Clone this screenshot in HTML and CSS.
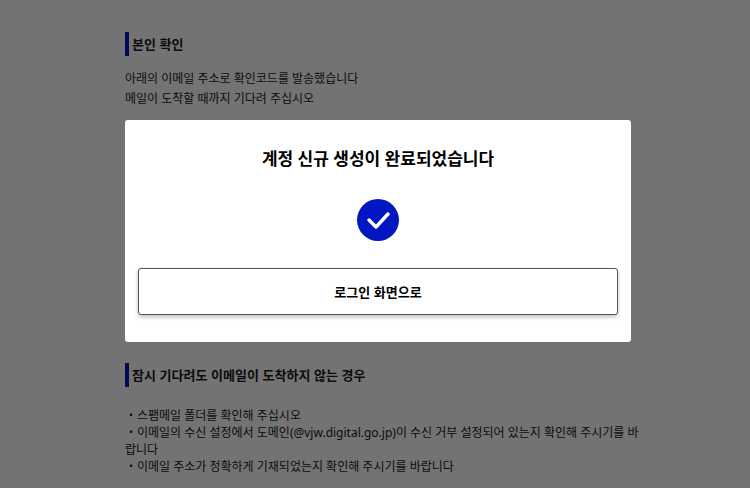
FILE: index.html
```html
<!DOCTYPE html>
<html lang="ko">
<head>
    <meta charset="UTF-8">
    <meta name="viewport" content="width=device-width, initial-scale=1.0">
    <title>계정 신규 생성</title>
    <link rel="stylesheet" href="styles.css">
</head>
<body>
    <main class="page">
        <section class="verify">
            <h2 class="heading">본인 확인</h2>
            <p class="lead">아래의 이메일 주소로 확인코드를 발송했습니다<br>메일이 도착할 때까지 기다려 주십시오</p>
        </section>
        <section class="help">
            <h2 class="heading">잠시 기다려도 이메일이 도착하지 않는 경우</h2>
            <p class="notes">・스팸메일 폴더를 확인해 주십시오<br>・이메일의 수신 설정에서 도메인(@vjw.digital.go.jp)이 수신 거부 설정되어 있는지 확인해 주시기를 바랍니다<br>・이메일 주소가 정확하게 기재되었는지 확인해 주시기를 바랍니다</p>
        </section>
    </main>

    <div class="overlay">
        <div class="modal" role="dialog" aria-modal="true" aria-labelledby="modal-title">
            <h1 class="modal-title" id="modal-title">계정 신규 생성이 완료되었습니다</h1>
            <svg class="check" viewBox="0 0 42 42" aria-hidden="true">
                <circle cx="21" cy="21" r="21" fill="#0017c1"/>
                <path d="M12 21L19 28L31 15" fill="none" stroke="#fff" stroke-width="3.4" stroke-linecap="round" stroke-linejoin="round"/>
            </svg>
            <button type="button" class="login">로그인 화면으로</button>
        </div>
    </div>
</body>
</html>
```

FILE: styles.css
```css
/* General Page Styling */
* {
    box-sizing: border-box;
}
body {
    margin: 0;
    background-color: white;
    color: #1a1a1c;
    font-family: "Noto Sans", "Noto Sans CJK KR", sans-serif;
    font-size: 12px;
}

/* Page and modal share the same side gutters */
.page,
.overlay {
    padding: 0 119px 0 125px;
}

.page {
    padding-top: 32px;
}

/* Section heading with blue bar */
.heading {
    margin: 0;
    padding-left: 3px;
    border-left: 4px solid #0017c1;
    font-family: "Noto Sans CJK KR", sans-serif;
    font-size: 13px;
    line-height: 24px;
}
.lead {
    margin: 13px 0 0;
    line-height: 20px;
}
.help {
    margin-top: 254px; /* Space taken up by the code entry area */
}
.notes {
    margin: 20px -8px 0 0;
    line-height: 17px;
    word-break: break-all;
}

/* Dark cover behind the modal */
.overlay {
    position: fixed;
    inset: 0;
    display: flex;
    align-items: center;
    padding-bottom: 26px;
    background-color: rgba(0, 0, 0, 0.55);
}

/* Modal */
.modal {
    display: flex;
    flex-direction: column;
    align-items: center;
    width: 100%;
    padding: 27px 13px;
    background-color: white;
    border-radius: 3px;
}
.modal-title {
    margin: 0;
    color: black;
    font-size: 17px;
    line-height: 24px;
}
.check {
    width: 42px;
    height: 42px;
    margin: 28px 0 27px;
}
.login {
    width: 100%;
    height: 47px;
    background-color: white;
    border: 1px solid #555;
    border-radius: 3px;
    box-shadow: 0 2px 4px rgba(0, 0, 0, 0.25);
    color: black;
    font-family: "Noto Sans CJK KR", sans-serif;
    font-size: 13px;
    font-weight: bold;
    cursor: pointer;
}
```
